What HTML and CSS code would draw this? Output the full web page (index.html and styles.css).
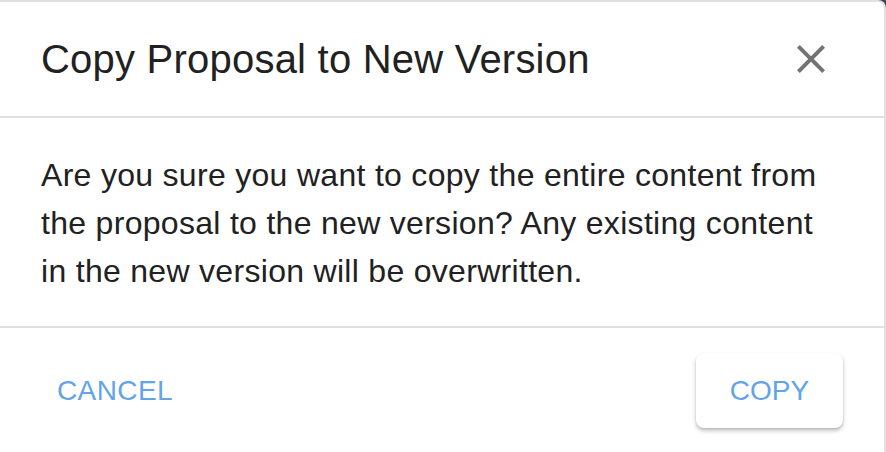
FILE: index.html
```html
<!DOCTYPE html>
<html lang="en">
<head>
<meta charset="utf-8">
<title>Copy Proposal to New Version</title>
<link rel="stylesheet" href="styles.css">
</head>
<body>
<div class="dialog" role="dialog" aria-labelledby="dlg-title">
  <header class="dialog-header">
    <h2 id="dlg-title" class="dialog-title">Copy Proposal to New Version</h2>
    <button class="close-btn" aria-label="Close">
      <svg viewBox="0 0 24 24" width="48" height="48" aria-hidden="true">
        <path d="M19 6.41L17.59 5 12 10.59 6.41 5 5 6.41 10.59 12 5 17.59 6.41 19 12 13.41 17.59 19 19 17.59 13.41 12z" fill="currentColor"/>
      </svg>
    </button>
  </header>
  <div class="dialog-content">
    <p class="dialog-text">Are you sure you want to copy the entire content from the proposal to the new version? Any existing content in the new version will be overwritten.</p>
  </div>
  <footer class="dialog-actions">
    <button class="btn btn-text">CANCEL</button>
    <button class="btn btn-raised">COPY</button>
  </footer>
</div>
</body>
</html>
```
FILE: styles.css
```css
html, body {
  margin: 0;
  padding: 0;
}
body {
  width: 886px;
  height: 452px;
  overflow: hidden;
  background: #3b4651;
  font-family: "Liberation Sans", Arial, Helvetica, sans-serif;
}
.dialog {
  box-sizing: border-box;
  width: 886px;
  height: 460px;
  background: #ffffff;
  border-top: 2px solid #e0e0e0;
  border-right: 2px solid #e0e0e0;
  border-top-right-radius: 8px;
  display: flex;
  flex-direction: column;
}
.dialog-header {
  height: 114px;
  border-bottom: 2px solid #e0e0e0;
  display: flex;
  align-items: center;
  justify-content: space-between;
  padding: 0 49px 0 41px;
}
.dialog-title {
  margin: 0;
  font-size: 40px;
  font-weight: 400;
  color: #212121;
  line-height: 46px;
  letter-spacing: 0.22px;
}
.close-btn {
  width: 48px;
  height: 48px;
  padding: 0;
  border: 0;
  background: transparent;
  color: #737373;
  display: flex;
  align-items: center;
  justify-content: center;
}
.close-btn svg {
  display: block;
}
.dialog-content {
  padding: 33px 40px 31px 41px;
  border-bottom: 2px solid #e0e0e0;
}
.dialog-text {
  margin: 0;
  font-size: 32px;
  line-height: 48px;
  color: #212121;
  width: 790px;
  letter-spacing: 0.3px;
}
.dialog-actions {
  display: flex;
  justify-content: space-between;
  align-items: flex-start;
  padding: 25px 41px 0 23px;
}
.btn {
  height: 75px;
  padding: 0 34px;
  border: 0;
  border-radius: 8px;
  background: #ffffff;
  color: #62a4e6;
  font-family: "Liberation Sans", Arial, Helvetica, sans-serif;
  font-size: 28px;
  letter-spacing: 0.4px;
  font-weight: 400;
  display: flex;
  align-items: center;
  justify-content: center;
}
.btn-raised {
  width: 147px;
  letter-spacing: 0;
  box-shadow: 0 3px 4px rgba(0, 0, 0, 0.22), 0 1px 2px rgba(0, 0, 0, 0.12);
}
```
